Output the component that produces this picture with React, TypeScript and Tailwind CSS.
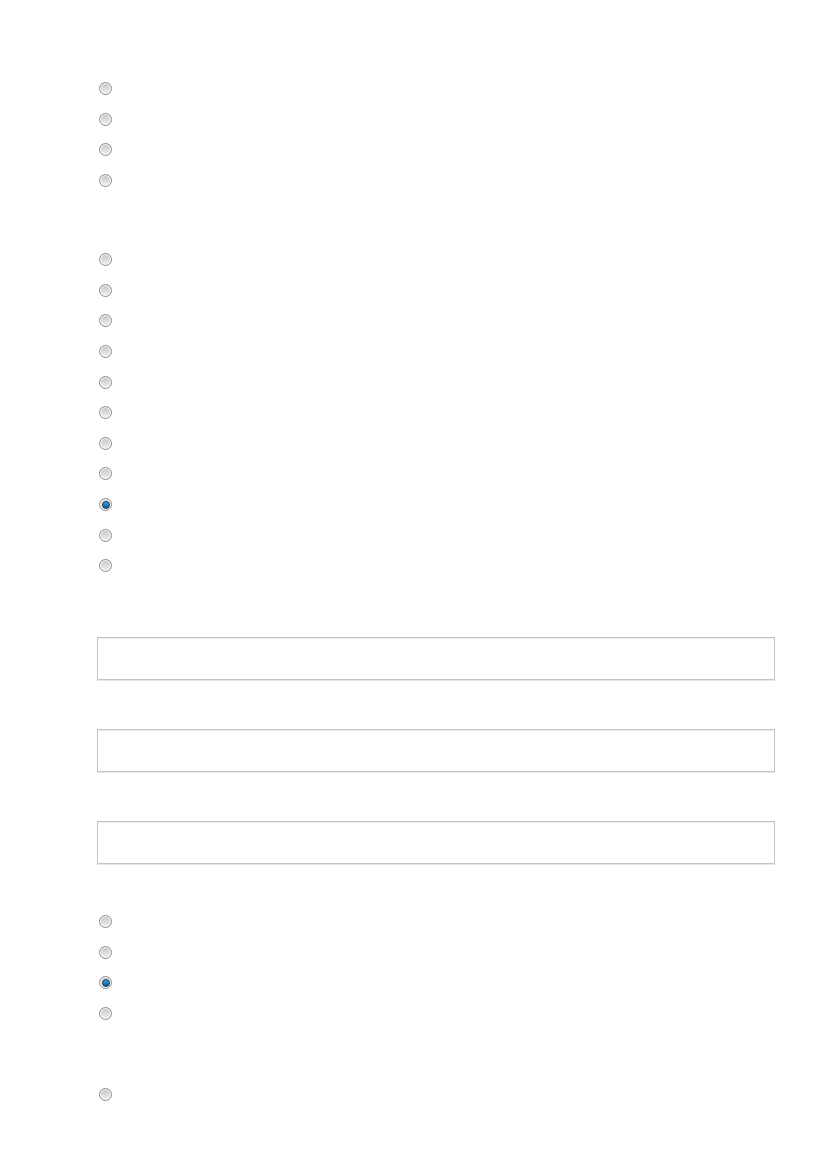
import React from "react";

function Radio({ checked }: { checked?: boolean }) {
  return (
    <span className="flex h-[13px] w-[13px] items-center justify-center rounded-full border border-[#8c8c8c] bg-linear-to-b from-[#c4c4c4] to-[#f2f2f2] shadow-[inset_0_0_0_1px_#fbfbfb]">
      {checked && (
        <span className="h-[8px] w-[8px] rounded-full border border-[#083a62] bg-linear-to-b from-[#46a2e0] to-[#0a5592]" />
      )}
    </span>
  );
}

function RadioGroup({ options, selected }: { options: number; selected?: number }) {
  return (
    <div className="flex flex-col">
      {Array.from({ length: options }).map((_, i) => (
        <label key={i} className="flex h-[30.6px] items-center pl-[2px]">
          <Radio checked={i === selected} />
        </label>
      ))}
    </div>
  );
}

function TextField() {
  return (
    <div className="h-[43px] w-[678px] border border-[#c4c4c4] bg-white shadow-[inset_0_1px_0_#ececec,0_1px_0_#e6e6e6]" />
  );
}

export default function App() {
  return (
    <div className="min-h-[1169px] w-[827px] bg-white pl-[97px] pt-[73.5px] font-['Liberation_Sans',sans-serif]">
      <RadioGroup options={4} />
      <div className="mt-[48.6px]">
        <RadioGroup options={11} selected={8} />
      </div>
      <div className="mt-[55.5px] flex flex-col gap-[49px]">
        <TextField />
        <TextField />
        <TextField />
      </div>
      <div className="mt-[43px]">
        <RadioGroup options={4} selected={2} />
      </div>
      <div className="mt-[50px]">
        <RadioGroup options={1} />
      </div>
    </div>
  );
}
